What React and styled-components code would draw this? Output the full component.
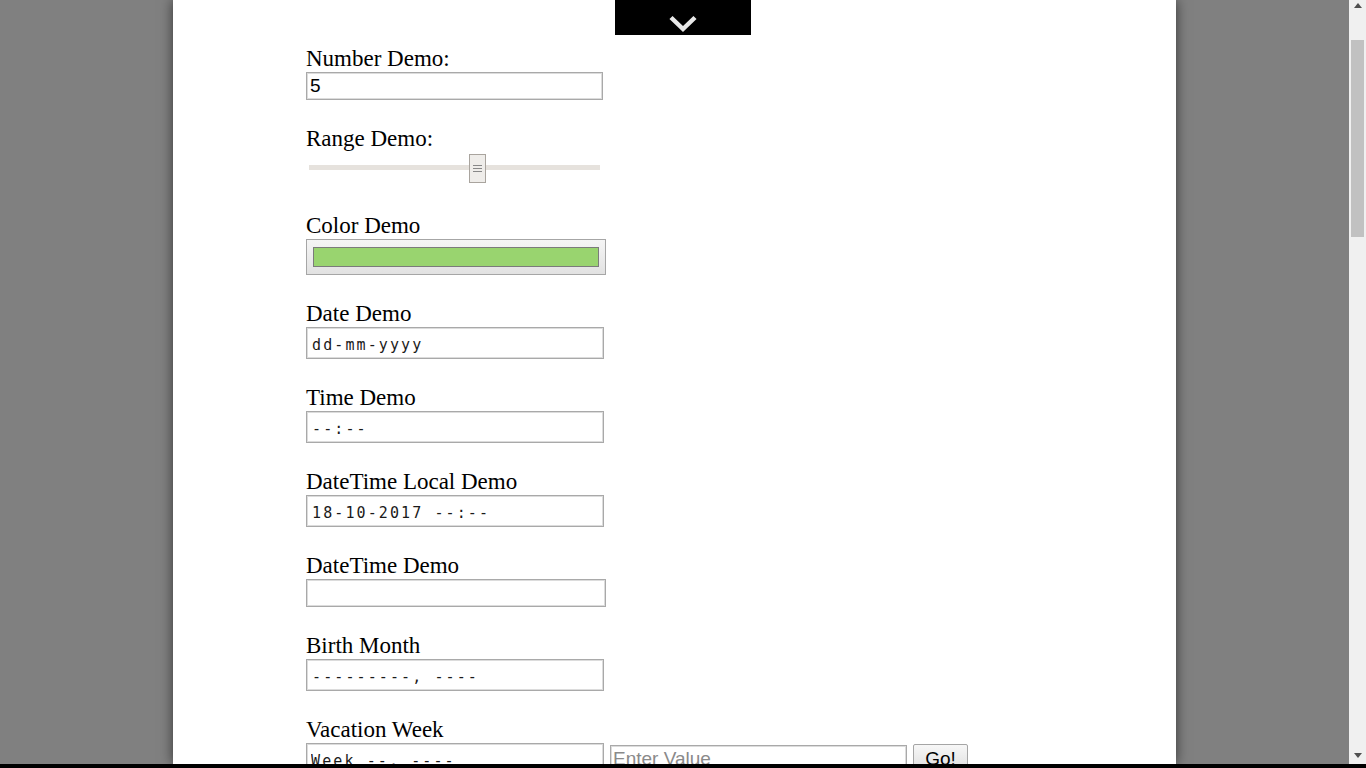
import React from "react";
import styled, { createGlobalStyle } from "styled-components";

const GlobalStyle = createGlobalStyle`
  html, body {
    margin: 0;
    padding: 0;
    height: 100%;
    overflow: hidden;
    background: #808080;
  }
  * { box-sizing: border-box; }
`;

const Screen = styled.div`
  width: 1366px;
  height: 768px;
  display: grid;
  grid-template-columns: 1fr 17px;
  grid-template-rows: 764px 4px;
`;

const Viewport = styled.div`
  background: #808080;
  overflow: hidden;
  display: flex;
  justify-content: center;
`;

const Panel = styled.main`
  width: 1003px;
  min-height: 100%;
  flex: none;
  background: #ffffff;
  box-shadow: 0 0 12px rgba(0, 0, 0, 0.6);
  padding: 46px 0 0 133px;
`;

const Tab = styled.button`
  position: fixed;
  top: 0;
  left: 615px;
  width: 136px;
  height: 35px;
  margin: 0;
  border: 0;
  padding: 14px 0 0;
  background: #000;
  display: flex;
  justify-content: center;
  align-items: flex-start;
  cursor: pointer;
`;

const Scrollbar = styled.div`
  background: #f0f0f0;
  display: flex;
  flex-direction: column;
  align-items: center;
`;

const ArrowBtn = styled.div`
  width: 17px;
  height: ${(p) => p.$h}px;
  display: flex;
  align-items: center;
  justify-content: center;
  flex: none;
`;

const Track = styled.div`
  flex: 1;
  width: 17px;
  display: flex;
  justify-content: center;
  padding-top: 30px;
`;

const Thumb = styled.div`
  width: 13px;
  height: 197px;
  background: #c1c1c1;
`;

const BottomBar = styled.div`
  grid-column: 1 / -1;
  background: #000;
`;

const Field = styled.div`
  margin-bottom: 26px;
`;

const Label = styled.label`
  display: block;
  font-family: "Liberation Serif", "Times New Roman", serif;
  font-size: 23px;
  line-height: 26px;
  color: #000;
`;

const TextBox = styled.input`
  display: block;
  width: ${(p) => p.$w}px;
  height: ${(p) => p.$h}px;
  margin: ${(p) => p.$mt || 0}px 0 0;
  border: 1px solid #a9a9a9;
  box-shadow: inset 0 0 0 1px #dcdcdc;
  background: #fff;
  padding: ${(p) => (p.$mono ? 4 : 0)}px 0 0 ${(p) => p.$pl ?? 3}px;
  font-family: ${(p) =>
    p.$mono
      ? '"DejaVu Sans Mono", "Liberation Mono", monospace'
      : '"Liberation Sans", Arial, sans-serif'};
  font-size: ${(p) => (p.$mono ? 15 : 19)}px;
  letter-spacing: ${(p) => (p.$mono ? 2.1 : 0)}px;
  color: ${(p) => (p.$mono ? "#1a1a1a" : "#000")};
  outline: none;
  &::placeholder {
    color: #8a8a8a;
  }
`;

const RangeInput = styled.input`
  -webkit-appearance: none;
  appearance: none;
  display: block;
  width: 291px;
  height: 35px;
  margin: 0 0 0 3px;
  padding: 0 0 4px;
  background: transparent;
  &::-webkit-slider-runnable-track {
    height: 5px;
    background: #e6e2dd;
    border: 0;
  }
  &::-webkit-slider-thumb {
    -webkit-appearance: none;
    width: 17px;
    height: 29px;
    margin-top: -11px;
    border: 1px solid #a9a49e;
    background:
      linear-gradient(#888, #888) no-repeat 3px 10px / 9px 1px,
      linear-gradient(#888, #888) no-repeat 3px 13px / 9px 1px,
      linear-gradient(#888, #888) no-repeat 3px 16px / 9px 1px,
      #efedea;
  }
`;

const ColorWell = styled.div`
  width: 300px;
  height: 36px;
  border: 1px solid #a6a6a6;
  background: linear-gradient(#f5f5f5, #e2e2e2);
  padding: 7px 6px;
`;

const Swatch = styled.div`
  height: 20px;
  border: 1px solid #7b7b7b;
  background: ${(p) => p.$color};
`;

const Row = styled.div`
  display: flex;
  align-items: flex-start;
  gap: 6px;
`;

const GoButton = styled.button`
  width: 55px;
  height: 30px;
  margin-top: 1px;
  border: 1px solid #a5a5a5;
  border-radius: 2px;
  background: linear-gradient(#f7f7f7, #dddddd);
  font-family: "Liberation Sans", Arial, sans-serif;
  font-size: 19px;
  line-height: 26px;
  color: #000;
  padding: 0;
`;

const Chevron = () => (
  <svg width="28" height="19" viewBox="0 0 28 19">
    <path d="M2 3.5 L14 15 L26 3.5" fill="none" stroke="#e8e8e8" strokeWidth="4.5" />
  </svg>
);

const Tri = ({ down }) => (
  <svg width="8" height="5" viewBox="0 0 8 5">
    <polygon points={down ? "0,0 8,0 4,5" : "0,5 8,5 4,0"} fill="#505050" />
  </svg>
);

export default function App() {
  return (
    <>
      <GlobalStyle />
      <Screen>
        <Viewport>
          <Panel>
            <Field>
              <Label>Number Demo:</Label>
              <TextBox $w={297} $h={28} readOnly value="5" />
            </Field>
            <Field>
              <Label>Range Demo:</Label>
              <RangeInput type="range" min="0" max="100" step="any" defaultValue="58.4" />
            </Field>
            <Field>
              <Label>Color Demo</Label>
              <ColorWell>
                <Swatch $color="#99d46f" />
              </ColorWell>
            </Field>
            <Field>
              <Label>Date Demo</Label>
              <TextBox $w={298} $h={32} $mono $pl={5} readOnly value="dd-mm-yyyy" />
            </Field>
            <Field>
              <Label>Time Demo</Label>
              <TextBox $w={298} $h={32} $mono $pl={5} readOnly value="--:--" />
            </Field>
            <Field>
              <Label>DateTime Local Demo</Label>
              <TextBox $w={298} $h={32} $mono $pl={5} readOnly value="18-10-2017 --:--" />
            </Field>
            <Field>
              <Label>DateTime Demo</Label>
              <TextBox $w={300} $h={28} readOnly value="" />
            </Field>
            <Field>
              <Label>Birth Month</Label>
              <TextBox $w={298} $h={32} $mono $pl={5} readOnly value="---------, ----" />
            </Field>
            <Field>
              <Label>Vacation Week</Label>
              <Row>
                <TextBox $w={298} $h={32} $mono $pl={4} readOnly value="Week --, ----" />
                <TextBox $w={297} $h={28} $mt={2} $pl={2} placeholder="Enter Value" />
                <GoButton>Go!</GoButton>
              </Row>
            </Field>
          </Panel>
        </Viewport>
        <Scrollbar>
          <ArrowBtn $h={10}>
            <Tri />
          </ArrowBtn>
          <Track>
            <Thumb />
          </Track>
          <ArrowBtn $h={18}>
            <Tri down />
          </ArrowBtn>
        </Scrollbar>
        <BottomBar />
        <Tab aria-label="toggle">
          <Chevron />
        </Tab>
      </Screen>
    </>
  );
}
